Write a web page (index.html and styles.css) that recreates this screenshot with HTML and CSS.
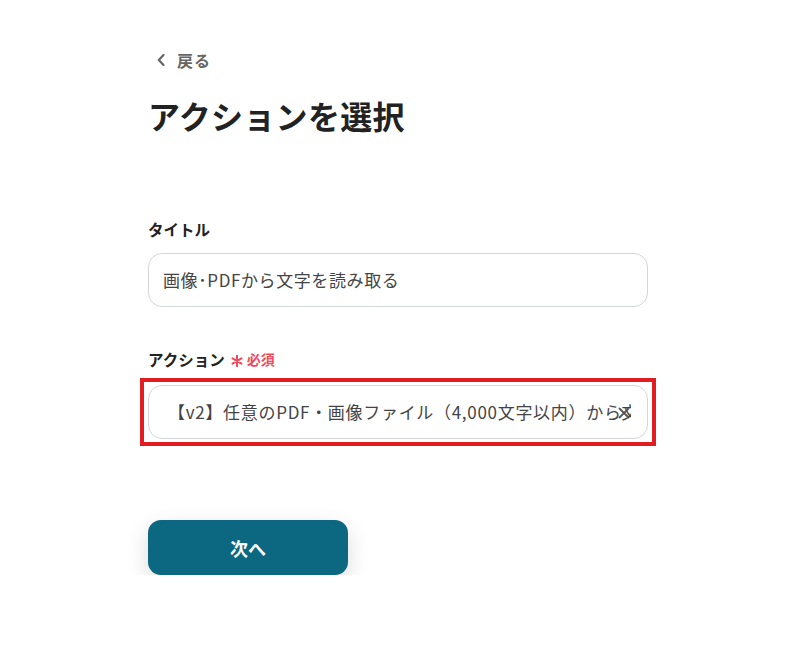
FILE: index.html
```html
<!DOCTYPE html>
<html lang="ja">
<head>
<meta charset="utf-8">
<link rel="stylesheet" href="styles.css">
</head>
<body>
<div class="page">
  <a class="back" href="#">
    <svg class="chev" width="10" height="14" viewBox="0 0 10 14"><path d="M7.5 2 L2.8 7 L7.5 12" fill="none" stroke="#666" stroke-width="2.2" stroke-linecap="round" stroke-linejoin="round"/></svg>
    <span>戻る</span>
  </a>
  <h1 class="title">アクションを選択</h1>

  <div class="label label-title">タイトル</div>
  <div class="input">画像･PDFから文字を読み取る</div>

  <div class="label label-action">アクション<span class="req"><svg class="ast" width="12" height="12" viewBox="0 0 12 12"><path d="M6 0.8 V11.2 M1.5 3.4 L10.5 8.6 M10.5 3.4 L1.5 8.6" stroke="#f04a5c" stroke-width="2" stroke-linecap="round"/></svg>必須</span></div>
  <div class="select-wrap">
    <div class="input select">
      <span class="select-text">【v2】任意のPDF・画像ファイル（4,000文字以内）から文字を読み取る</span>
      <svg class="clear" width="12" height="12" viewBox="0 0 12 12"><path d="M1.5 1.5 L10.5 10.5 M10.5 1.5 L1.5 10.5" stroke="#555" stroke-width="1.8" stroke-linecap="round"/></svg>
    </div>
    <div class="highlight"></div>
  </div>

  <button class="next">次へ</button>
</div>
</body>
</html>
```
FILE: styles.css
```css
* { box-sizing: border-box; }
html, body { margin: 0; padding: 0; background: #fff; }
body {
  font-family: "Noto Sans CJK JP", "Noto Sans", sans-serif;
  color: #222;
}
.page {
  width: 500px;
  margin-left: 148px;
  padding-top: 50px;
  display: flex;
  flex-direction: column;
  align-items: flex-start;
}
.back {
  display: flex;
  align-items: center;
  gap: 11px;
  margin-left: 8px;
  height: 20px;
  font-size: 16px;
  font-weight: 700;
  color: #666;
  text-decoration: none;
  line-height: 20px;
  letter-spacing: 1px;
}
.chev { display: block; }
.title {
  margin: 25px 0 0;
  font-size: 32px;
  line-height: 40px;
  font-weight: 700;
  color: #222;
  letter-spacing: 0.3px;
}
.label {
  font-size: 15.5px;
  font-weight: 700;
  line-height: 20px;
  color: #222;
  display: flex;
  align-items: center;
}
.label-title { margin-top: 84px; }
.label-action { margin-top: 42px; }
.req {
  color: #f04a5c;
  font-size: 14px;
  font-weight: 700;
  margin-left: 6px;
  display: flex;
  align-items: center;
}
.ast {
  display: block;
  margin-right: 4px;
  position: relative;
  top: 2px;
}
.input {
  width: 500px;
  height: 54px;
  margin-top: 14px;
  border: 1px solid #d3d6dc;
  border-radius: 14px;
  padding: 0 14px 2px;
  display: flex;
  align-items: center;
  font-size: 17px;
  letter-spacing: 0.6px;
  color: #444;
  white-space: nowrap;
  overflow: hidden;
}
.select-wrap {
  position: relative;
  margin-top: 16px;
}
.select {
  margin-top: 0;
  padding: 0 16px 2px 19px;
  position: relative;
}
.select-text {
  display: block;
  overflow: hidden;
  width: 465px;
  letter-spacing: 0.7px;
}
.clear {
  position: absolute;
  right: 17px;
  top: 21px;
}
.highlight {
  position: absolute;
  left: -8px;
  right: -8px;
  top: -7px;
  bottom: -7px;
  border: 4px solid #e11d22;
  pointer-events: none;
}
.next {
  margin-top: 81px;
  width: 200px;
  height: 55px;
  border: none;
  border-radius: 13px;
  background: #0b6880;
  color: #fff;
  font-family: inherit;
  font-size: 18px;
  font-weight: 700;
  box-shadow: 0 8px 22px rgba(0, 0, 0, 0.14);
  cursor: pointer;
}
```
